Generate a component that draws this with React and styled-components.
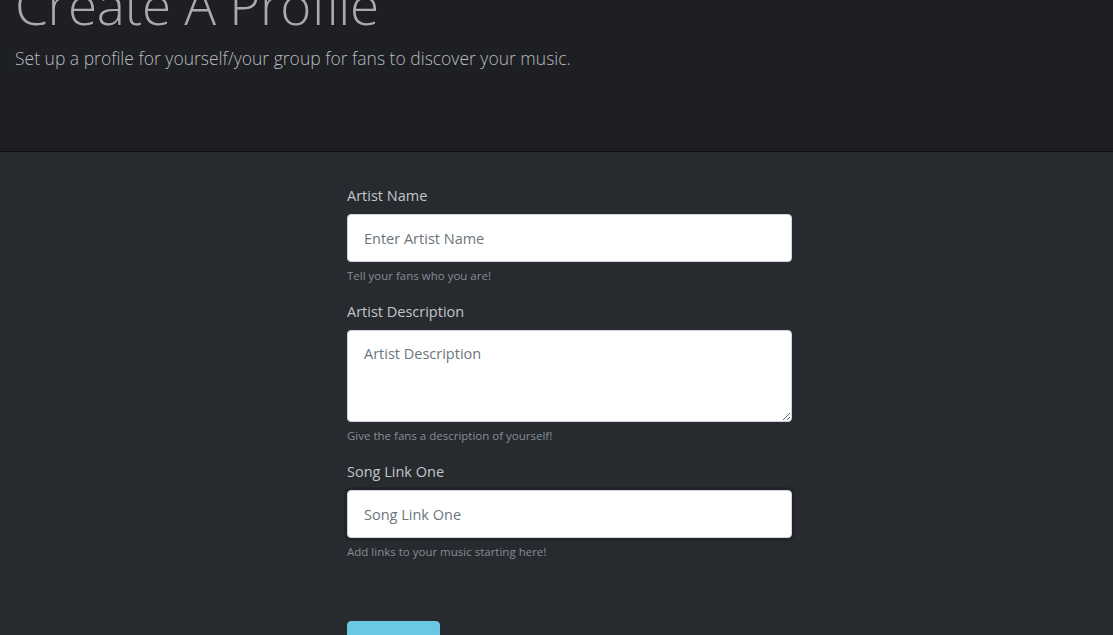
import styled, { createGlobalStyle } from "styled-components";

const GlobalStyle = createGlobalStyle`
  html, body {
    margin: 0;
    padding: 0;
    background: #272a2f;
    font-family: "Open Sans", "Noto Sans", sans-serif;
    overflow: hidden;
  }
`;

const Page = styled.div`
  min-height: 635px;
  background: #272a2f;
`;

const Header = styled.header`
  height: 151px;
  padding: 0 15px;
  background: #1e1f23;
  border-bottom: 1px solid #0e0f11;
  overflow: hidden;
`;

const Title = styled.h1`
  margin: -27px 0 0;
  font-size: 53px;
  font-weight: 300;
  line-height: 1.2;
  color: #a9aaac;
  letter-spacing: -0.3px;
`;

const Lead = styled.p`
  margin: 8px 0 0;
  font-size: 17.5px;
  font-weight: 300;
  line-height: 1.5;
  color: #b9bcc0;
`;

const Main = styled.main`
  display: grid;
  grid-template-columns: 347px 445px 1fr;
  padding-top: 32px;
`;

const Form = styled.form`
  grid-column: 2;
  display: flex;
  flex-direction: column;
`;

const Group = styled.div`
  display: flex;
  flex-direction: column;
  margin-bottom: 15px;
`;

const Label = styled.label`
  font-size: 14.5px;
  line-height: 24px;
  color: #c3c6ca;
  margin-bottom: 6px;
`;

const fieldStyles = `
  box-sizing: border-box;
  width: 100%;
  padding: 0 16px;
  background: #fff;
  border: 1px solid #ced4da;
  border-radius: 4px;
  font-family: "Open Sans", "Noto Sans", sans-serif;
  font-size: 14.5px;
  color: #495057;
  outline: none;
  caret-color: #333;

  &::placeholder {
    color: #6c757d;
  }

  &:focus {
    box-shadow: 0 0 0 3px rgba(0, 0, 0, 0.12);
  }
`;

const Input = styled.input`
  ${fieldStyles}
  height: 48px;
`;

const TextArea = styled.textarea`
  ${fieldStyles}
  display: block;
  height: 92px;
  padding-top: 12px;
  line-height: 22px;
  resize: vertical;
`;

const Help = styled.small`
  margin-top: 4px;
  font-size: 11.5px;
  line-height: 19px;
  color: #868d95;
`;

const Submit = styled.button`
  margin-top: 45px;
  width: 93px;
  height: 50px;
  padding: 14px 0 0;
  background: #6bc8e3;
  border: 1px solid #6bc8e3;
  border-radius: 4px;
  color: #fff;
  font-family: "Open Sans", "Noto Sans", sans-serif;
  font-size: 17px;
  cursor: pointer;
`;

export default function App() {
  return (
    <Page>
      <GlobalStyle />
      <Header>
        <Title>Create A Profile</Title>
        <Lead>Set up a profile for yourself/your group for fans to discover your music.</Lead>
      </Header>
      <Main>
        <Form onSubmit={(e) => e.preventDefault()}>
          <Group>
            <Label htmlFor="artistName">Artist Name</Label>
            <Input id="artistName" type="text" placeholder="Enter Artist Name" />
            <Help>Tell your fans who you are!</Help>
          </Group>
          <Group>
            <Label htmlFor="artistDescription">Artist Description</Label>
            <TextArea id="artistDescription" placeholder="Artist Description" />
            <Help>Give the fans a description of yourself!</Help>
          </Group>
          <Group>
            <Label htmlFor="songLinkOne">Song Link One</Label>
            <Input id="songLinkOne" type="text" placeholder="Song Link One" autoFocus />
            <Help>Add links to your music starting here!</Help>
          </Group>
          <Submit type="submit">Submit</Submit>
        </Form>
      </Main>
    </Page>
  );
}
